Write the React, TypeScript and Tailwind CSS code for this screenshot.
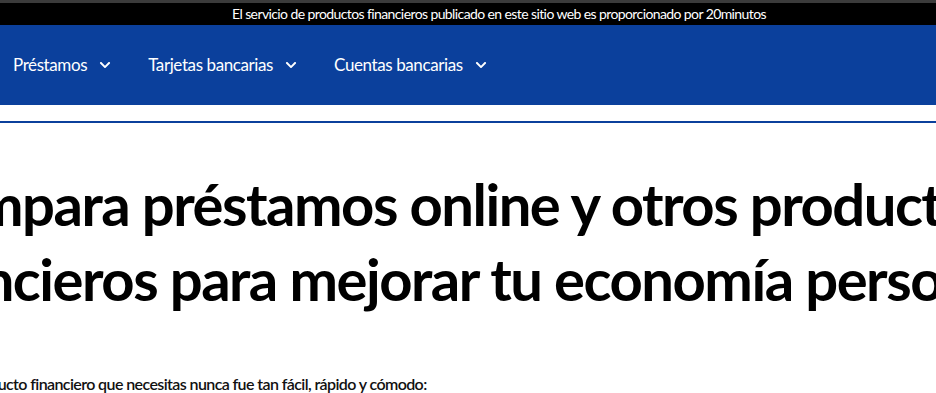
import React from 'react';
import { FaChevronDown } from 'react-icons/fa';

const navItems = ['Préstamos', 'Tarjetas bancarias', 'Cuentas bancarias'];

const App = () => {
  return (
    <div className="w-[936px] h-[393px] overflow-hidden bg-white font-['Lato','Liberation_Sans',sans-serif]">
      {/* Disclaimer bar */}
      <div className="h-[3px] bg-[#3b3b3b]" />
      <div className="h-[22px] bg-black flex items-center justify-center pl-[62px]">
        <span className="text-white text-[14px] leading-none tracking-[-0.6px]">
          El servicio de productos financieros publicado en este sitio web es proporcionado por 20minutos
        </span>
      </div>

      {/* Main nav */}
      <nav className="h-[80px] bg-[#0b409c] flex items-center pl-[13px]">
        {navItems.map((item) => (
          <div key={item} className="flex items-center gap-[12px] mr-[37px] text-white text-[17px] tracking-[-0.4px]">
            <span>{item}</span>
            <FaChevronDown className="w-[12px] h-[12px]" />
          </div>
        ))}
      </nav>

      <div className="h-[16px]" />
      <div className="h-[2px] bg-[#0b409c]" />

      {/* Hero */}
      <div className="w-[1400px] ml-[-248px] pt-[43px]">
        <h1 className="text-center font-bold text-black text-[58px] leading-[75px] tracking-[-1.5px] whitespace-nowrap">
          Compara préstamos online y otros productos
          <br />
          financieros para mejorar tu economía personal
        </h1>
        <p className="mt-[56px] pl-[200px] text-[16px] font-semibold tracking-[-0.6px] text-[#111]">
          El producto financiero que necesitas nunca fue tan fácil, rápido y cómodo:
        </p>
      </div>
    </div>
  );
};

export default App;
